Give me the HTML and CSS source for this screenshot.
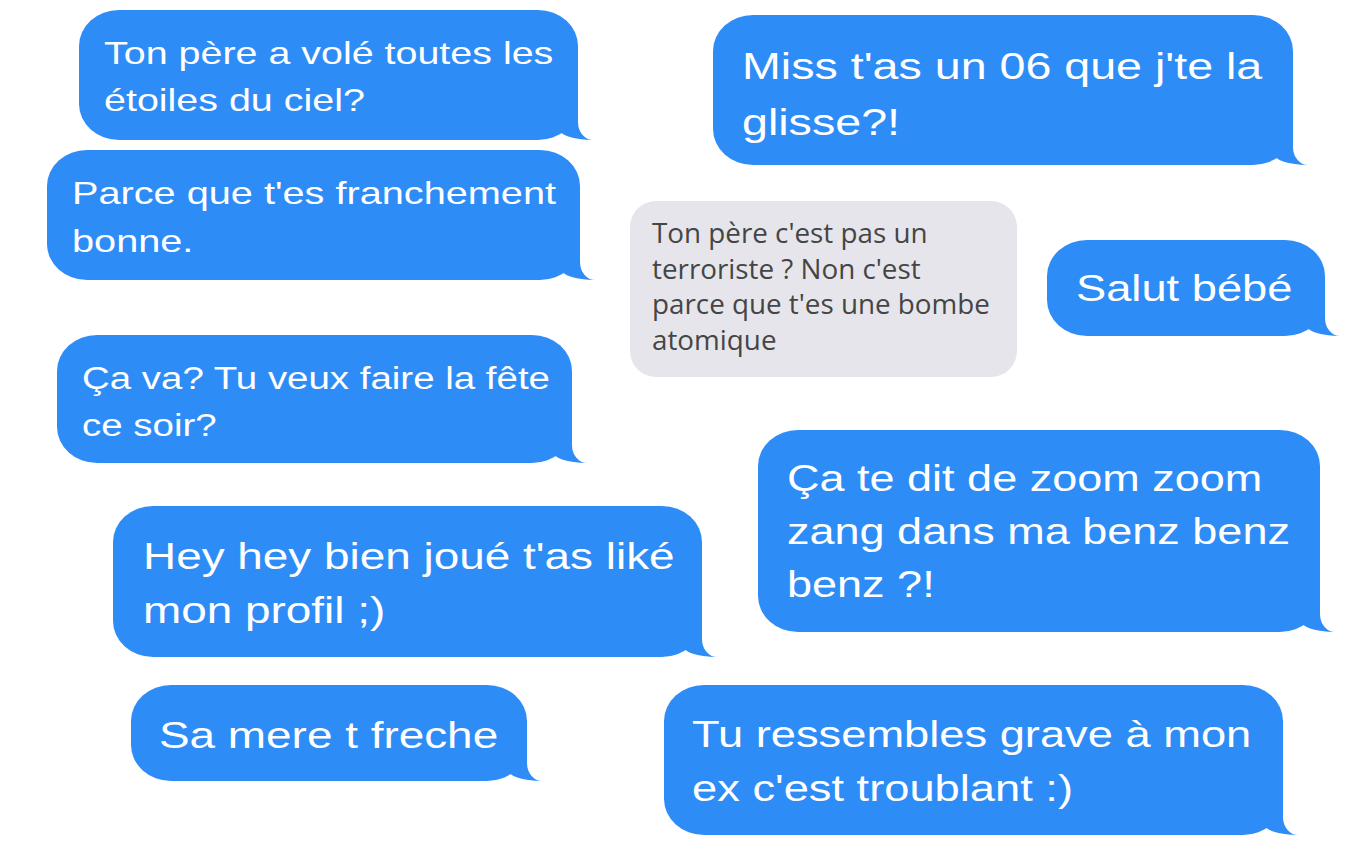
FILE: index.html
```html
<!DOCTYPE HTML>
<html>
<head>
<meta charset="utf-8">
<link rel="stylesheet" href="styles.css">
</head>
<body>
<div class="board">
<!--left column-->
<div class="bubble b-etoiles"><span class="txt">Ton père a volé toutes les<br>étoiles du ciel?</span></div>
<div class="bubble b-bonne"><span class="txt">Parce que t'es franchement<br>bonne.</span></div>
<div class="bubble b-fete"><span class="txt">Ça va? Tu veux faire la fête<br>ce soir?</span></div>
<div class="bubble b-profil"><span class="txt">Hey hey bien joué t'as liké<br>mon profil ;)</span></div>
<div class="bubble b-freche"><span class="txt">Sa mere t freche</span></div>

<!--right column-->
<div class="bubble b-glisse"><span class="txt">Miss t'as un 06 que j'te la<br>glisse?!</span></div>
<div class="grey b-bombe">Ton père c'est pas un<br>terroriste ? Non c'est<br>parce que t'es une bombe<br>atomique</div>
<div class="bubble b-salut"><span class="txt">Salut bébé</span></div>
<div class="bubble b-benz"><span class="txt">Ça te dit de zoom zoom<br>zang dans ma benz benz<br>benz ?!</span></div>
<div class="bubble b-ex"><span class="txt">Tu ressembles grave à mon<br>ex c'est troublant :)</span></div>
</div>
</body>
</html>
```

FILE: styles.css
```css
body
{
  margin: 0;
  background: #fff;
}
.board
{
  position: relative;
  width: 1348px;
  height: 846px;
  overflow: hidden;
  font-family: "Liberation Sans", Arial, sans-serif;
}

/* blue iMessage bubble with tail at bottom right */
.bubble
{
  position: absolute;
  box-sizing: border-box;
  background: #2e8cf7;
  color: #fff;
  border-radius: 40px / 36px;
  white-space: nowrap;
}
/* tail: blue blob filling the corner, white blob carving the flare */
.bubble::before
{
  content: "";
  position: absolute;
  bottom: 0;
  right: -15px;
  width: 35px;
  height: 40px;
  background: #2e8cf7;
  border-bottom-left-radius: 35px 12px;
}
.bubble::after
{
  content: "";
  position: absolute;
  bottom: 0;
  right: -35px;
  width: 35px;
  height: 44px;
  background: #fff;
  border-bottom-left-radius: 15px 18px;
}
/* the collage is stretched sideways, so is the text */
.txt
{
  position: relative;
  z-index: 1;
  display: inline-block;
  transform: scaleX(1.24);
  transform-origin: left top;
}

.grey
{
  position: absolute;
  box-sizing: border-box;
  background: #e6e5eb;
  color: #454545;
  border-radius: 26px;
  font-family: "Open Sans", sans-serif;
  font-size: 27.8px;
  line-height: 35.5px;
  white-space: nowrap;
}

/*positions in the collage*/
.b-etoiles { left: 79px; top: 10px; width: 499px; height: 130px; padding: 20px 0 0 25px; font-size: 31.8px; line-height: 47px; }
.b-bonne { left: 47px; top: 150px; width: 533px; height: 130px; padding: 19px 0 0 25px; font-size: 32px; line-height: 48px; }
.b-fete { left: 57px; top: 335px; width: 515px; height: 128px; padding: 20px 0 0 25px; font-size: 31px; line-height: 47px; }
.b-profil { left: 113px; top: 506px; width: 589px; height: 151px; padding: 24px 0 0 30px; font-size: 37px; line-height: 54px; }
.b-freche { left: 131px; top: 685px; width: 396px; height: 96px; padding: 27px 0 0 28px; font-size: 37px; line-height: 48px; }

.b-glisse { left: 713px; top: 15px; width: 580px; height: 150px; padding: 23px 0 0 29px; font-size: 37.6px; line-height: 56px; }
.b-bombe { left: 630px; top: 201px; width: 387px; height: 176px; padding: 14px 0 0 22px; }
.b-salut { left: 1047px; top: 240px; width: 278px; height: 96px; padding: 25px 0 0 29px; font-size: 36.5px; line-height: 48px; }
.b-benz { left: 758px; top: 430px; width: 562px; height: 202px; padding: 22px 0 0 29px; font-size: 36.3px; line-height: 53px; }
.b-ex { left: 664px; top: 685px; width: 619px; height: 150px; padding: 23px 0 0 28px; font-size: 36.5px; line-height: 54px; }
```
